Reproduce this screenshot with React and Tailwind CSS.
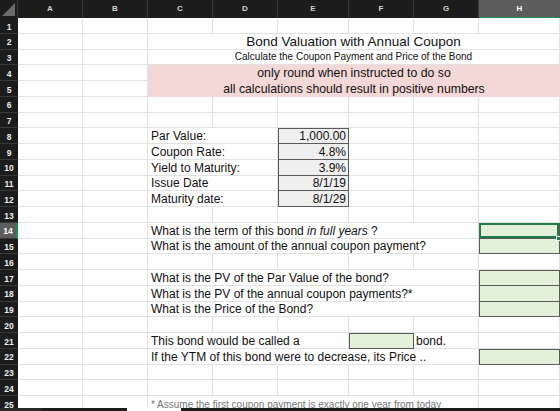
import React from 'react';

const COLS = ['A', 'B', 'C', 'D', 'E', 'F', 'G', 'H'];

function Cell({ className = '', line = 'border-[#e2e2e2]', children }) {
    return (
        <div className={`min-w-0 flex items-end whitespace-nowrap leading-none border-r border-b ${line} ${className}`}>
            {children}
        </div>
    );
}

function RowHead({ n, active }) {
    return (
        <div
            className={`flex items-center justify-center pt-[3px] text-[8.5px] font-bold border-b border-[#383838] ${
                active ? 'bg-[#5c5c5c] text-white border-r-2 border-r-[#1e8c4e]' : 'bg-[#1c1c1c] text-[#ececec]'
            }`}
        >
            {n}
        </div>
    );
}

function Empty({ n, count = 8 }) {
    return (
        <>
            <RowHead n={n} />
            {Array.from({ length: count }).map((_, i) => (
                <Cell key={i} />
            ))}
        </>
    );
}

const txt = 'pl-[3px] pb-px text-[12px] text-[#111]';
const dark = 'border-[#5a5a5a]';
const green = 'bg-[#e3f0da]';
const box = 'bg-[#efefef] justify-end pr-[2px] pb-px text-[12px] text-[#111]';

export default function App() {
    const inputs = [
        ['Par Value:', '1,000.00'],
        ['Coupon Rate:', '4.8%'],
        ['Yield to Maturity:', '3.9%'],
        ['Issue Date', '8/1/19'],
        ['Maturity date:', '8/1/29'],
    ];

    return (
        <div className="w-[560px] h-[411px] bg-white font-['Liberation_Sans',Arial,sans-serif] overflow-hidden">
            <div className="h-[408px] overflow-hidden">
                <div className="grid grid-cols-[18px_65px_65px_65px_65px_71px_65px_65px_81px] grid-rows-[18px] auto-rows-[15.75px]">
                    {/* header */}
                    <div className="bg-[#1c1c1c] border-r border-[#383838] flex items-end justify-end p-[2px]">
                        <svg width="13" height="13" viewBox="0 0 13 13">
                            <polygon points="13,0 13,13 0,13" fill="#6b6b6b" />
                        </svg>
                    </div>
                    {COLS.map((c) =>
                        c === 'H' ? (
                            <div key={c} className="bg-[#5c5c5c] text-white text-[8px] font-bold flex items-center justify-center border-b border-[#1e8c4e]">
                                {c}
                            </div>
                        ) : (
                            <div key={c} className="bg-[#1c1c1c] text-[#d4d4d4] text-[8px] font-bold flex items-center justify-center border-r border-[#383838]">
                                {c}
                            </div>
                        )
                    )}

                    <Empty n={1} />

                    <RowHead n={2} />
                    <Cell />
                    <Cell />
                    <Cell className="col-span-6 justify-center text-[13.5px] text-[#111]">Bond Valuation with Annual Coupon</Cell>

                    <RowHead n={3} />
                    <Cell />
                    <Cell />
                    <Cell className="col-span-6 justify-center pb-[2px] text-[10px] text-[#111]">Calculate the Coupon Payment and Price of the Bond</Cell>

                    <RowHead n={4} />
                    <Cell />
                    <Cell />
                    <div className="col-span-6 row-span-2 bg-[#f4d7d7] flex flex-col items-center text-[12.25px] text-[#111] leading-none whitespace-nowrap">
                        <div className="h-[15.75px] flex items-end pb-[2px]">only round when instructed to do so</div>
                        <div className="h-[15.75px] flex items-end pb-[2px]">all calculations should result in positive numbers</div>
                    </div>

                    <RowHead n={5} />
                    <Cell />
                    <Cell />

                    <Empty n={6} />
                    <Empty n={7} />

                    {inputs.map(([label, value], i) => (
                        <React.Fragment key={label}>
                            <RowHead n={8 + i} />
                            <Cell />
                            <Cell />
                            <Cell className={`col-span-2 ${txt}`}>{label}</Cell>
                            <Cell line={dark} className={`${box} ${i === 0 ? 'shadow-[inset_1px_1px_0_#5a5a5a]' : 'shadow-[inset_1px_0_0_#5a5a5a]'}`}>
                                {value}
                            </Cell>
                            <Cell />
                            <Cell />
                            <Cell />
                        </React.Fragment>
                    ))}

                    <Empty n={13} />

                    <RowHead n={14} active />
                    <Cell />
                    <Cell />
                    <Cell className={`col-span-5 ${txt}`}>
                        What is the term of this bond&nbsp;<i>in full years</i>&nbsp;?
                    </Cell>
                    <Cell line={dark} className={`${green} relative shadow-[inset_0_0_0_2px_#217a47]`}>
                        <span className="absolute right-[-2px] bottom-[-3px] w-[5px] h-[5px] bg-[#217a47] border border-white" />
                    </Cell>

                    <RowHead n={15} />
                    <Cell />
                    <Cell />
                    <Cell className={`col-span-5 ${txt}`}>What is the amount of the annual coupon payment?</Cell>
                    <Cell line={dark} className={`${green} shadow-[inset_1px_0_0_#5a5a5a]`} />

                    <Empty n={16} />

                    {[
                        'What is the PV of the Par Value of the bond?',
                        'What is the PV of the annual coupon payments?*',
                        'What is the Price of the Bond?',
                    ].map((q, i) => (
                        <React.Fragment key={q}>
                            <RowHead n={17 + i} />
                            <Cell />
                            <Cell />
                            <Cell className={`col-span-5 ${txt}`}>{q}</Cell>
                            <Cell line={dark} className={`${green} ${i === 0 ? 'shadow-[inset_1px_1px_0_#5a5a5a]' : 'shadow-[inset_1px_0_0_#5a5a5a]'}`} />
                        </React.Fragment>
                    ))}

                    <Empty n={20} />

                    <RowHead n={21} />
                    <Cell />
                    <Cell />
                    <Cell className={`col-span-3 ${txt}`}>This bond would be called a</Cell>
                    <Cell line={dark} className={`${green} shadow-[inset_1px_1px_0_#5a5a5a]`} />
                    <Cell className="pl-[2px] pb-px text-[12px] text-[#111]">bond.</Cell>
                    <Cell />

                    <RowHead n={22} />
                    <Cell />
                    <Cell />
                    <Cell className={`col-span-5 ${txt}`}>If the YTM of this bond were to decrease, its Price ..</Cell>
                    <Cell line={dark} className={`${green} shadow-[inset_1px_1px_0_#5a5a5a]`} />

                    <Empty n={23} />
                    <Empty n={24} />

                    <RowHead n={25} />
                    <Cell />
                    <Cell />
                    <Cell className="col-span-5 pl-[3px] pb-px text-[10px] text-[#777]">* Assume the first coupon payment is exactly one year from today</Cell>
                    <Cell />
                </div>
            </div>
            <div className="flex h-[3px]">
                <div className="w-[42px] bg-[#2a2a2a]" />
                <div className="w-[85px] bg-[#1c1c1c]" />
                <div className="w-[54px]" />
                <div className="flex-1 bg-[#1c1c1c]" />
            </div>
        </div>
    );
}
